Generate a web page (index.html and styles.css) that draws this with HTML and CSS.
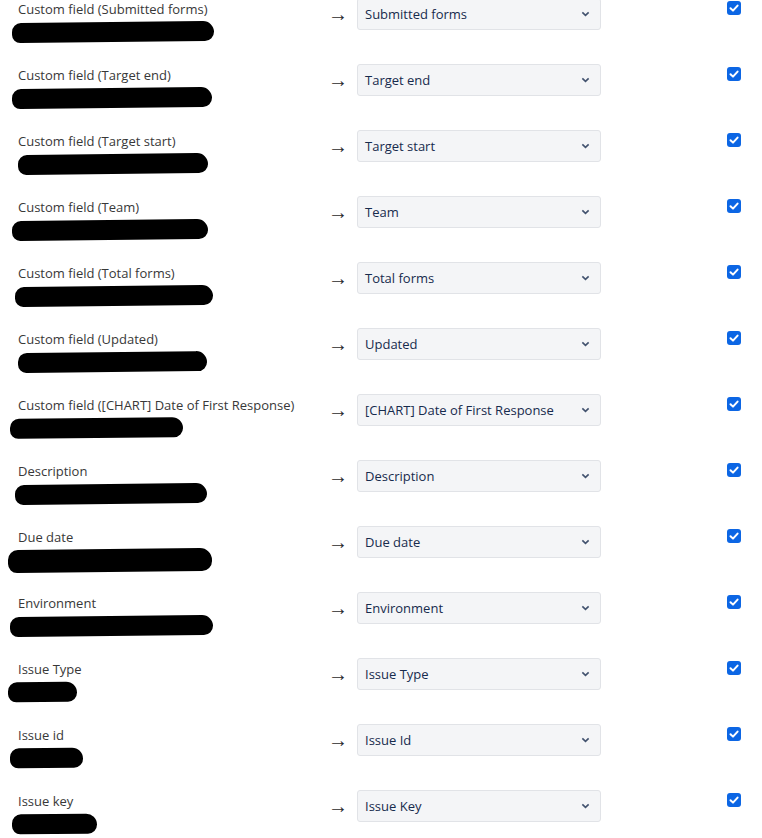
FILE: index.html
```html
<!DOCTYPE html>
<html lang="en">
<head>
  <meta charset="UTF-8">
  <title>Field mapping</title>
  <link rel="stylesheet" href="styles.css">
</head>
<body>
  <div class="mapping">
    <div class="row">
      <div class="source"><div class="label">Custom field (Submitted forms)</div><div class="redact" style="width:202px;margin-left:-6px"></div></div>
      <div class="arrow">&rarr;</div>
      <div class="select"><span>Submitted forms</span><svg viewBox="0 0 10 6"><path d="M1.5 1.2 5 4.6 8.5 1.2"/></svg></div>
      <div class="check"><span class="box"><svg viewBox="0 0 14 14"><path d="M3.5 7.2 6 9.6 10.6 4.6"/></svg></span></div>
    </div>
    <div class="row">
      <div class="source"><div class="label">Custom field (Target end)</div><div class="redact" style="width:200px;margin-left:-6px"></div></div>
      <div class="arrow">&rarr;</div>
      <div class="select"><span>Target end</span><svg viewBox="0 0 10 6"><path d="M1.5 1.2 5 4.6 8.5 1.2"/></svg></div>
      <div class="check"><span class="box"><svg viewBox="0 0 14 14"><path d="M3.5 7.2 6 9.6 10.6 4.6"/></svg></span></div>
    </div>
    <div class="row">
      <div class="source"><div class="label">Custom field (Target start)</div><div class="redact" style="width:190px;margin-left:0"></div></div>
      <div class="arrow">&rarr;</div>
      <div class="select"><span>Target start</span><svg viewBox="0 0 10 6"><path d="M1.5 1.2 5 4.6 8.5 1.2"/></svg></div>
      <div class="check"><span class="box"><svg viewBox="0 0 14 14"><path d="M3.5 7.2 6 9.6 10.6 4.6"/></svg></span></div>
    </div>
    <div class="row">
      <div class="source"><div class="label">Custom field (Team)</div><div class="redact" style="width:196px;margin-left:-6px"></div></div>
      <div class="arrow">&rarr;</div>
      <div class="select"><span>Team</span><svg viewBox="0 0 10 6"><path d="M1.5 1.2 5 4.6 8.5 1.2"/></svg></div>
      <div class="check"><span class="box"><svg viewBox="0 0 14 14"><path d="M3.5 7.2 6 9.6 10.6 4.6"/></svg></span></div>
    </div>
    <div class="row">
      <div class="source"><div class="label">Custom field (Total forms)</div><div class="redact" style="width:198px;margin-left:-3px"></div></div>
      <div class="arrow">&rarr;</div>
      <div class="select"><span>Total forms</span><svg viewBox="0 0 10 6"><path d="M1.5 1.2 5 4.6 8.5 1.2"/></svg></div>
      <div class="check"><span class="box"><svg viewBox="0 0 14 14"><path d="M3.5 7.2 6 9.6 10.6 4.6"/></svg></span></div>
    </div>
    <div class="row">
      <div class="source"><div class="label">Custom field (Updated)</div><div class="redact" style="width:189px;margin-left:0"></div></div>
      <div class="arrow">&rarr;</div>
      <div class="select"><span>Updated</span><svg viewBox="0 0 10 6"><path d="M1.5 1.2 5 4.6 8.5 1.2"/></svg></div>
      <div class="check"><span class="box"><svg viewBox="0 0 14 14"><path d="M3.5 7.2 6 9.6 10.6 4.6"/></svg></span></div>
    </div>
    <div class="row">
      <div class="source"><div class="label">Custom field ([CHART] Date of First Response)</div><div class="redact" style="width:173px;margin-left:-8px"></div></div>
      <div class="arrow">&rarr;</div>
      <div class="select"><span>[CHART] Date of First Response</span><svg viewBox="0 0 10 6"><path d="M1.5 1.2 5 4.6 8.5 1.2"/></svg></div>
      <div class="check"><span class="box"><svg viewBox="0 0 14 14"><path d="M3.5 7.2 6 9.6 10.6 4.6"/></svg></span></div>
    </div>
    <div class="row">
      <div class="source"><div class="label">Description</div><div class="redact" style="width:192px;margin-left:-3px"></div></div>
      <div class="arrow">&rarr;</div>
      <div class="select"><span>Description</span><svg viewBox="0 0 10 6"><path d="M1.5 1.2 5 4.6 8.5 1.2"/></svg></div>
      <div class="check"><span class="box"><svg viewBox="0 0 14 14"><path d="M3.5 7.2 6 9.6 10.6 4.6"/></svg></span></div>
    </div>
    <div class="row">
      <div class="source"><div class="label">Due date</div><div class="redact thick" style="width:204px;margin-left:-10px"></div></div>
      <div class="arrow">&rarr;</div>
      <div class="select"><span>Due date</span><svg viewBox="0 0 10 6"><path d="M1.5 1.2 5 4.6 8.5 1.2"/></svg></div>
      <div class="check"><span class="box"><svg viewBox="0 0 14 14"><path d="M3.5 7.2 6 9.6 10.6 4.6"/></svg></span></div>
    </div>
    <div class="row">
      <div class="source"><div class="label">Environment</div><div class="redact" style="width:203px;margin-left:-8px"></div></div>
      <div class="arrow">&rarr;</div>
      <div class="select"><span>Environment</span><svg viewBox="0 0 10 6"><path d="M1.5 1.2 5 4.6 8.5 1.2"/></svg></div>
      <div class="check"><span class="box"><svg viewBox="0 0 14 14"><path d="M3.5 7.2 6 9.6 10.6 4.6"/></svg></span></div>
    </div>
    <div class="row">
      <div class="source"><div class="label">Issue Type</div><div class="redact" style="width:69px;margin-left:-10px"></div></div>
      <div class="arrow">&rarr;</div>
      <div class="select"><span>Issue Type</span><svg viewBox="0 0 10 6"><path d="M1.5 1.2 5 4.6 8.5 1.2"/></svg></div>
      <div class="check"><span class="box"><svg viewBox="0 0 14 14"><path d="M3.5 7.2 6 9.6 10.6 4.6"/></svg></span></div>
    </div>
    <div class="row">
      <div class="source"><div class="label">Issue id</div><div class="redact" style="width:73px;margin-left:-8px"></div></div>
      <div class="arrow">&rarr;</div>
      <div class="select"><span>Issue Id</span><svg viewBox="0 0 10 6"><path d="M1.5 1.2 5 4.6 8.5 1.2"/></svg></div>
      <div class="check"><span class="box"><svg viewBox="0 0 14 14"><path d="M3.5 7.2 6 9.6 10.6 4.6"/></svg></span></div>
    </div>
    <div class="row">
      <div class="source"><div class="label">Issue key</div><div class="redact" style="width:85px;margin-left:-6px"></div></div>
      <div class="arrow">&rarr;</div>
      <div class="select"><span>Issue Key</span><svg viewBox="0 0 10 6"><path d="M1.5 1.2 5 4.6 8.5 1.2"/></svg></div>
      <div class="check"><span class="box"><svg viewBox="0 0 14 14"><path d="M3.5 7.2 6 9.6 10.6 4.6"/></svg></span></div>
    </div>
  </div>
</body>
</html>
```

FILE: styles.css
```css
body {
  margin: 0;
  background-color: #FFFFFF;
  font-family: 'Open Sans', 'Noto Sans', sans-serif;
  font-size: 13px;
  color: #383838;
}
.mapping {
  margin-top: -2px;
  padding-left: 18px;
}
.row {
  display: grid;
  grid-template-columns: 310px 29px 244px 1fr;
  align-items: start;
  height: 66px;
}
.label {
  line-height: 20px;
  margin-top: 1px;
  white-space: nowrap;
}
.redact {
  height: 20px;
  margin-top: 3px;
  background-color: #000;
  border-radius: 10px 12px 10px 9px;
  transform: rotate(-0.6deg);
}
.redact.thick {
  height: 23px;
  margin-top: 2px;
}
.arrow {
  line-height: 31px;
  font-family: 'Noto Sans', sans-serif;
  font-size: 20px;
  color: #2A2A2A;
}
.select {
  box-sizing: border-box;
  height: 32px;
  display: flex;
  align-items: center;
  justify-content: space-between;
  padding: 0 10px 0 7px;
  background-color: #F4F5F7;
  border: 1px solid #E1E3E7;
  border-radius: 3px;
  color: #172B4D;
}
.select svg {
  width: 9px;
  height: 6px;
  fill: none;
  stroke: #42526E;
  stroke-width: 1.8;
}
.check {
  padding: 3px 0 0 126px;
}
.box {
  display: block;
  width: 14px;
  height: 14px;
  background-color: #0C66E4;
  border-radius: 3px;
}
.box svg {
  display: block;
  width: 14px;
  height: 14px;
  fill: none;
  stroke: #FFFFFF;
  stroke-width: 2;
  stroke-linecap: round;
  stroke-linejoin: round;
}
```
